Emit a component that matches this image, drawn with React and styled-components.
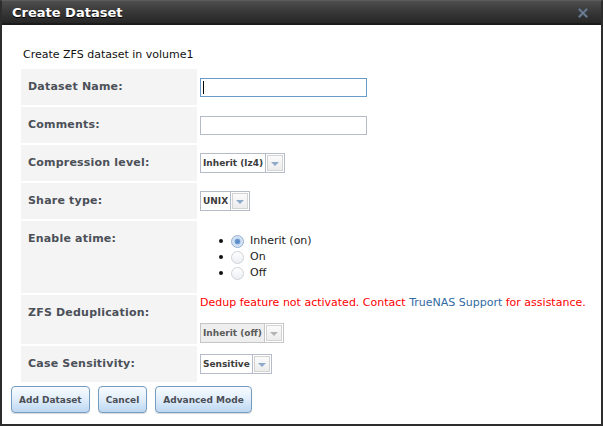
import React from "react";
import styled, { createGlobalStyle } from "styled-components";

const Global = createGlobalStyle`
  html, body { margin: 0; padding: 0; background: #fff; }
  * { box-sizing: border-box; }
  body { font-family: "DejaVu Sans", Verdana, sans-serif; }
`;

const Window = styled.div`
  width: 603px;
  height: 426px;
  border: 2px solid #2d2d2d;
  border-top: 1px solid #5c5c5c;
  display: flex;
  flex-direction: column;
  background: #fff;
`;

const TitleBar = styled.div`
  height: 24px;
  flex: none;
  display: flex;
  align-items: center;
  justify-content: space-between;
  padding: 0 13px 0 10px;
  background: linear-gradient(#4e4e4e, #3a3a3a 45%, #262626);
  border-bottom: 2px solid #1b1b1b;
`;

const Title = styled.span`
  color: #fff;
  font: bold 13px "DejaVu Sans", sans-serif;
  text-shadow: 0 1px 0 #000;
`;

const CloseIcon = styled.svg`
  width: 10px;
  height: 10px;
  display: block;
  margin-top: 1px;
`;

const Body = styled.div`
  flex: 1;
  padding-top: 23px;
`;

const Intro = styled.div`
  font-size: 11px;
  line-height: 14px;
  color: #111;
  margin: 0 0 5px 21px;
`;

const FormTable = styled.table`
  border-spacing: 2px;
  margin-left: 17px;
`;

const LabelCell = styled.td`
  width: 176px;
  background: #f4f4f4;
  vertical-align: top;
  padding: 11px 7px;
  font: bold 11px/14px "DejaVu Sans", sans-serif;
  letter-spacing: 0.2px;
  color: #4b5058;
  white-space: nowrap;
`;

const ValueCell = styled.td`
  vertical-align: middle;
  padding: 1px 0 1px 1px;
  font-size: 11px;
`;

const InputWrap = styled.div`
  position: relative;
  width: 167px;
`;

const TextInput = styled.div`
  width: 167px;
  height: 19px;
  border: 1px solid ${(p) => (p.$focused ? "#6a9bc9" : "#b5bcc7")};
  background: #fff;
`;

const Caret = styled.span`
  position: absolute;
  left: 3px;
  top: 3px;
  width: 1px;
  height: 13px;
  background: #000;
`;

const SelectBox = styled.div`
  display: inline-flex;
  height: 20px;
  border: 1px solid ${(p) => (p.$disabled ? "#c6c6c6" : "#b5bcc7")};
  background: ${(p) => (p.$disabled ? "#eeeeee" : "#fff")};
  vertical-align: middle;
`;

const SelectText = styled.span`
  font: bold 9px/18px "DejaVu Sans", sans-serif;
  color: ${(p) => (p.$disabled ? "#5a5a5a" : "#3c3c3c")};
  padding: 0 2px 0 2px;
  white-space: nowrap;
`;

const SelectArrow = styled.span`
  width: 19px;
  border-left: 1px solid ${(p) => (p.$disabled ? "#c6c6c6" : "#b5bcc7")};
  padding: 1px;
  display: flex;
  background: #fff;
`;

const ArrowButton = styled.span`
  flex: 1;
  display: flex;
  align-items: center;
  justify-content: center;
  border: 1px solid #d3d3d3;
  background: linear-gradient(#fbfbfb, #ececec);
  &::after {
    content: "";
    border-left: 4px solid transparent;
    border-right: 4px solid transparent;
    border-top: 4px solid ${(p) => (p.$disabled ? "#b4b4b4" : "#8fa9cb")};
    margin-top: 1px;
  }
`;

const RadioList = styled.ul`
  margin: 11px 0;
  padding-left: 19px;
  list-style: none;
`;

const RadioItem = styled.li`
  height: 16px;
  font-size: 11px;
  line-height: 16px;
  color: #1a1a1a;
  display: flex;
  align-items: center;
  &::before {
    content: "";
    width: 4px;
    height: 4px;
    border-radius: 50%;
    background: #111;
    margin-right: 8px;
    flex: none;
  }
  & > label {
    display: flex;
    align-items: center;
    gap: 6px;
  }
`;

const RadioCircle = styled.span`
  width: 13px;
  height: 13px;
  border-radius: 50%;
  flex: none;
  border: 1px solid ${(p) => (p.$checked ? "#93aed0" : "#cfd3d8")};
  background: ${(p) =>
    p.$checked
      ? "radial-gradient(circle, #4f86c4 0, #6e9bd0 2.4px, #c7dbf1 3.2px, #eef4fb 100%)"
      : "linear-gradient(#ffffff, #eceef0)"};
`;

const DedupMsg = styled.div`
  color: #ff0000;
  font-size: 11px;
  line-height: 14px;
  white-space: nowrap;
  margin-bottom: 13px;
  & a {
    color: #2f6aa3;
    text-decoration: none;
  }
`;

const ButtonRow = styled.div`
  display: flex;
  gap: 8px;
  padding-left: 9px;
  margin-top: 2px;
`;

const Button = styled.button`
  height: 27px;
  padding: 0 7px;
  border: 1px solid #769dc0;
  border-radius: 4px;
  background: linear-gradient(#f7fbff, #e3effb 45%, #bcd7f1);
  box-shadow: 0 1px 1px rgba(0, 0, 0, 0.15);
  font: bold 9px "DejaVu Sans", sans-serif;
  color: #4a4e55;
  cursor: pointer;
`;

function Select({ value, disabled }) {
  return (
    <SelectBox $disabled={disabled}>
      <SelectText $disabled={disabled}>{value}</SelectText>
      <SelectArrow $disabled={disabled}>
        <ArrowButton $disabled={disabled} />
      </SelectArrow>
    </SelectBox>
  );
}

function Row({ label, children }) {
  return (
    <tr>
      <LabelCell>{label}</LabelCell>
      <ValueCell>{children}</ValueCell>
    </tr>
  );
}

export default function App() {
  return (
    <>
      <Global />
      <Window>
        <TitleBar>
          <Title>Create Dataset</Title>
          <CloseIcon viewBox="0 0 10 10">
            <path d="M1.5 1.5 L8.5 8.5 M8.5 1.5 L1.5 8.5" stroke="#46505c" strokeWidth="3" strokeLinecap="square" />
            <path d="M1.5 1.5 L8.5 8.5 M8.5 1.5 L1.5 8.5" stroke="#6d8097" strokeWidth="1.5" strokeLinecap="square" />
          </CloseIcon>
        </TitleBar>
        <Body>
          <Intro>Create ZFS dataset in volume1</Intro>
          <FormTable>
            <tbody>
              <Row label="Dataset Name:">
                <InputWrap>
                  <TextInput $focused />
                  <Caret />
                </InputWrap>
              </Row>
              <Row label="Comments:">
                <TextInput />
              </Row>
              <Row label="Compression level:">
                <Select value="Inherit (lz4)" />
              </Row>
              <Row label="Share type:">
                <Select value="UNIX" />
              </Row>
              <Row label="Enable atime:">
                <RadioList>
                  {[
                    ["Inherit (on)", true],
                    ["On", false],
                    ["Off", false],
                  ].map(([t, c]) => (
                    <RadioItem key={t}>
                      <label>
                        <RadioCircle $checked={c} />
                        {t}
                      </label>
                    </RadioItem>
                  ))}
                </RadioList>
              </Row>
              <Row label="ZFS Deduplication:">
                <DedupMsg>
                  Dedup feature not activated. Contact <a href="#">TrueNAS Support</a> for assistance.
                </DedupMsg>
                <Select value="Inherit (off)" disabled />
              </Row>
              <Row label="Case Sensitivity:">
                <Select value="Sensitive" />
              </Row>
            </tbody>
          </FormTable>
          <ButtonRow>
            <Button>Add Dataset</Button>
            <Button>Cancel</Button>
            <Button>Advanced Mode</Button>
          </ButtonRow>
        </Body>
      </Window>
    </>
  );
}
